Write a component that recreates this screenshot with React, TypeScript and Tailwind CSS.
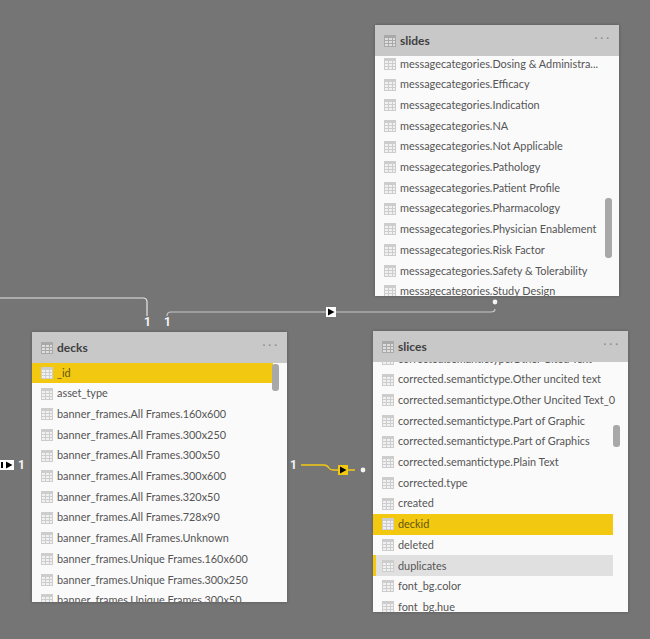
const slides = [
  "messagecategories.Dosing & Administra...",
  "messagecategories.Efficacy",
  "messagecategories.Indication",
  "messagecategories.NA",
  "messagecategories.Not Applicable",
  "messagecategories.Pathology",
  "messagecategories.Patient Profile",
  "messagecategories.Pharmacology",
  "messagecategories.Physician Enablement",
  "messagecategories.Risk Factor",
  "messagecategories.Safety & Tolerability",
  "messagecategories.Study Design",
]

const decks = [
  "_id",
  "asset_type",
  "banner_frames.All Frames.160x600",
  "banner_frames.All Frames.300x250",
  "banner_frames.All Frames.300x50",
  "banner_frames.All Frames.300x600",
  "banner_frames.All Frames.320x50",
  "banner_frames.All Frames.728x90",
  "banner_frames.All Frames.Unknown",
  "banner_frames.Unique Frames.160x600",
  "banner_frames.Unique Frames.300x250",
  "banner_frames.Unique Frames.300x50",
]

const slices = [
  "corrected.semantictype.Other Cited Text",
  "corrected.semantictype.Other uncited text",
  "corrected.semantictype.Other Uncited Text_0",
  "corrected.semantictype.Part of Graphic",
  "corrected.semantictype.Part of Graphics",
  "corrected.semantictype.Plain Text",
  "corrected.type",
  "created",
  "deckid",
  "deleted",
  "duplicates",
  "font_bg.color",
  "font_bg.hue",
]

function TableIcon({ header }: { header?: boolean }) {
  const bg = header ? "#a9a9a9" : "#cdcdcd"
  const cell = header ? "#dedede" : "#f1f1f1"
  const cells = []
  for (const y of [3, 6, 9]) {
    for (const x of [1, 5, 9]) {
      cells.push(<rect key={`${x}-${y}`} x={x} y={y} width={x === 9 ? 2 : 3} height="2" fill={cell} />)
    }
  }
  return (
    <svg width="12" height="12" viewBox="0 0 12 12" className="shrink-0">
      <rect width="12" height="12" fill={bg} />
      {cells}
    </svg>
  )
}

function Row({ name, state }: { name: string; state?: "key" | "hover" }) {
  let cls = "flex h-[20.7px] items-center gap-[4px] pl-[9px] text-[#555555]"
  if (state === "key") cls = "flex h-[20.7px] items-center gap-[4px] pl-[9px] text-[#65550f] bg-[#f2c811]"
  if (state === "hover") cls = "flex h-[20.7px] items-center gap-[4px] pl-[6px] text-[#555555] bg-[#e0e0e0] border-l-[3px] border-[#f2c811]"
  return (
    <div className={cls}>
      <TableIcon />
      <span className="whitespace-nowrap">{name}</span>
    </div>
  )
}

function TableCard({
  title,
  rows,
  className,
  listClass,
  thumbClass,
  keyRow,
  hoverRow,
}: {
  title: string
  rows: string[]
  className: string
  listClass: string
  thumbClass: string
  keyRow?: string
  hoverRow?: string
}) {
  return (
    <div className={`absolute flex flex-col bg-[#fafafa] shadow-[0_0_3px_rgba(0,0,0,0.25)] ${className}`}>
      <div className="z-10 flex h-[31px] shrink-0 items-center gap-[4px] bg-[#c8c8c8] pl-[9px] pr-[7px]">
        <TableIcon header />
        <span className="flex-1 text-[12px] font-bold text-[#404040]">{title}</span>
        <span className="mb-[6px] text-[11px] leading-none tracking-[3px] text-[#8a8a8a]">···</span>
      </div>
      <div className="relative min-h-0 flex-1 overflow-hidden">
        <div className={listClass}>
          {rows.map((r) => (
            <Row key={r} name={r} state={r === keyRow ? "key" : r === hoverRow ? "hover" : undefined} />
          ))}
        </div>
        <div className={`absolute w-[7px] rounded-[3px] bg-[#a8a8a8] ${thumbClass}`} />
      </div>
    </div>
  )
}

function Label({ className }: { className: string }) {
  return <span className={`absolute font-['Roboto',sans-serif] text-[12px] font-bold leading-none text-[#f4f4f4] ${className}`}>1</span>
}

export default function App() {
  return (
    <div className="relative h-[639px] w-[650px] overflow-hidden bg-[#757575] font-['Lato','Noto_Sans',sans-serif] text-[10.9px]">
      <TableCard
        title="slides"
        rows={slides}
        className="left-[375px] top-[25px] h-[271px] w-[244px]"
        listClass="-mt-[2.5px] pr-[14px]"
        thumbClass="right-[7px] top-[142px] h-[60px]"
      />
      <TableCard
        title="decks"
        rows={decks}
        className="left-[32px] top-[332px] h-[270px] w-[255px]"
        listClass="-mt-[0.5px] pr-[14px]"
        thumbClass="right-[8px] top-[1px] h-[27px]"
        keyRow="_id"
      />
      <TableCard
        title="slices"
        rows={slices}
        className="left-[373px] top-[331px] h-[281px] w-[255px]"
        listClass="-mt-[13.5px] pr-[15px]"
        thumbClass="right-[8px] top-[63px] h-[22px]"
        keyRow="deckid"
        hoverRow="duplicates"
      />

      <svg width="650" height="639" viewBox="0 0 650 639" className="absolute left-0 top-0">
        <path d="M0 298 H143 Q147 298 147 302 V316" fill="none" stroke="#e6e6e6" strokeWidth="1.2" />
        <path d="M167 316 Q167 312 171 312 H491 Q495 312 495 309" fill="none" stroke="#c8c8c8" strokeWidth="1.2" />
        <circle cx="495" cy="302" r="2.4" fill="#f4f4f4" />
        <rect x="326" y="307" width="10" height="10" fill="#ffffff" />
        <path d="M328 308.5 L334.5 312 L328 315.5 Z" fill="#000000" />

        <rect x="0" y="460" width="14" height="10" fill="#ffffff" />
        <rect x="1" y="462" width="2" height="6" fill="#000000" />
        <path d="M6 461.5 L12.5 465 L6 468.5 Z" fill="#000000" />

        <path d="M301 465 H324 Q327 465 329 468 Q330 470 333 470 H355" fill="none" stroke="#f2c811" strokeWidth="1.3" />
        <rect x="338" y="465" width="10" height="10" fill="#f2c811" />
        <path d="M340 466.5 L346.5 470 L340 473.5 Z" fill="#000000" />
        <circle cx="363" cy="470" r="2.4" fill="#f4f4f4" />
      </svg>

      <Label className="left-[144px] top-[316px]" />
      <Label className="left-[164px] top-[316px]" />
      <Label className="left-[18px] top-[459px]" />
      <Label className="left-[290px] top-[459px]" />
    </div>
  )
}
